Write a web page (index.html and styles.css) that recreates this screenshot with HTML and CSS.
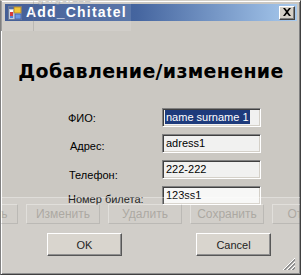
FILE: index.html
```html
<!DOCTYPE html>
<html>
<head>
<meta charset="utf-8">
<link rel="stylesheet" href="styles.css">
</head>
<body>
<div class="win">
  <div class="titlebar">
    <svg class="icon" width="14" height="14" viewBox="0 0 14 14">
      <rect x="0.5" y="0.5" width="13" height="13" fill="#b8c4d8" stroke="#5a6a8a"/>
      <rect x="1" y="1" width="12" height="2" fill="#3a5a9a"/>
      <rect x="2" y="4" width="3" height="3" fill="#ffffff"/>
      <rect x="2" y="6" width="3" height="4" fill="#d02020"/>
      <rect x="2" y="10" width="3" height="2" fill="#4070d0"/>
      <rect x="6" y="1" width="7" height="6" fill="#f0c020" stroke="#a07010" stroke-width="0.8"/>
      <rect x="7" y="8" width="6" height="5" fill="#5a8ae0" stroke="#2a4a9a" stroke-width="0.8"/>
    </svg>
    <span class="title">Add_Chitatel</span>
    <div class="close">
      <svg width="10" height="8" viewBox="0 0 10 8">
        <path d="M1 0h2l2 2.5L7 0h2L6 4l3 4H7L5 5.5 3 8H1l3-4z" fill="#000"/>
      </svg>
    </div>
  </div>
  <div class="client">
    <h1 class="heading">Добавление/изменение</h1>
    <div class="form">
      <div class="row">
        <span class="lbl lbl-fio">ФИО:</span>
        <div class="tb"><span class="sel">name surname 1</span></div>
      </div>
      <div class="row">
        <span class="lbl lbl-addr">Адрес:</span>
        <div class="tb">adress1</div>
      </div>
      <div class="row">
        <span class="lbl lbl-tel">Телефон:</span>
        <div class="tb">222-222</div>
      </div>
      <div class="row">
        <span class="lbl lbl-num">Номер билета:</span>
        <div class="tb tb-light">123ss1</div>
      </div>
    </div>
    <div class="actions">
      <div class="btn">OK</div>
      <div class="btn">Cancel</div>
    </div>
    <svg class="grip" width="13" height="13" viewBox="0 0 13 13">
      <path d="M12 1L1 12M12 5L5 12M12 9L9 12" stroke="#808080" stroke-width="1"/>
      <path d="M12 2L2 12M12 6L6 12M12 10L10 12" stroke="#808080" stroke-width="1"/>
      <path d="M12 0L0 12M12 4L4 12M12 8L8 12" stroke="#ffffff" stroke-width="1"/>
    </svg>
  </div>
  <div class="ghost-top"></div>
  <div class="ghost-strip"><span class="ghost-text">gorgor112</span></div>
  <div class="ghost-bottom">
    <div class="gbtns">
      <div class="gbtn">Добавить</div>
      <div class="gbtn">Изменить</div>
      <div class="gbtn">Удалить</div>
      <div class="gbtn">Сохранить</div>
      <div class="gbtn">Отмена</div>
    </div>
  </div>
</div>
</body>
</html>
```

FILE: styles.css
```css
* { box-sizing: border-box; }
html, body { margin: 0; padding: 0; }
body {
  width: 301px;
  height: 275px;
  overflow: hidden;
  background: #d4d0c8;
  font-family: "Liberation Sans", Arial, sans-serif;
}
.win {
  position: relative;
  width: 301px;
  height: 275px;
  border: 1px solid;
  border-color: #d4d0c8 #404040 #404040 #808080;
  box-shadow: inset 1px 1px #ffffff, inset -1px -1px #808080;
  background: #cbc8c2;
  padding: 3px 3px 2px 4px;
  display: flex;
  flex-direction: column;
  overflow: hidden;
}
.titlebar {
  height: 17px;
  flex: none;
  display: flex;
  align-items: center;
  background: linear-gradient(to right, #2a4888 0%, #45659f 45%, #a8caee 100%);
  padding-left: 3px;
  padding-right: 2px;
}
.icon { flex: none; margin-top: 1px; }
.title {
  color: #ffffff;
  font-weight: bold;
  font-size: 14px;
  letter-spacing: 1.2px;
  margin-left: 4px;
  flex: 1;
  line-height: 15px;
}
.close {
  width: 16px;
  height: 14px;
  background: #d4d0c8;
  border: 1px solid;
  border-color: #ffffff #404040 #404040 #ffffff;
  box-shadow: inset -1px -1px #808080;
  display: flex;
  align-items: center;
  justify-content: center;
  padding-bottom: 1px;
}
.client {
  flex: 1;
  position: relative;
  display: flex;
  flex-direction: column;
}
.heading {
  margin: 39px 0 0 0;
  font-family: "DejaVu Sans", sans-serif;
  font-weight: bold;
  font-size: 19px;
  line-height: 22px;
  text-align: center;
  color: #000;
  letter-spacing: 0.3px;
}
.form {
  margin-top: 26px;
  padding-left: 63px;
  display: flex;
  flex-direction: column;
  gap: 7px;
}
.row {
  display: flex;
  height: 19px;
}
.lbl {
  width: 94px;
  font-size: 11px;
  line-height: 13px;
  color: #000;
}
.lbl-fio { margin-top: 4px; }
.lbl-addr { margin-top: 6px; padding-left: 2px; }
.lbl-tel { margin-top: 9px; padding-left: 1px; }
.lbl-num { margin-top: 7px; }
.tb {
  width: 99px;
  height: 19px;
  border: 1px solid;
  border-color: #808080 #ffffff #ffffff #808080;
  box-shadow: inset 1px 1px #404040, inset -1px -1px #d4d0c8;
  background: #f1f1f0;
  font-size: 11px;
  line-height: 15px;
  padding: 1px 2px 1px 3px;
  color: #000;
  white-space: nowrap;
  overflow: hidden;
}
.tb-light { background: #f7f7f6; }
.sel {
  display: inline-block;
  background: #1e3b7c;
  color: #ffffff;
  line-height: 14px;
  margin-left: -1px;
  padding: 0 1px;
}
.actions {
  margin-top: 28px;
  padding-left: 42px;
  display: flex;
  gap: 74px;
}
.btn {
  width: 75px;
  height: 23px;
  border: 1px solid;
  border-color: #ffffff #404040 #404040 #ffffff;
  box-shadow: inset -1px -1px #808080;
  background: #d4d0c8;
  font-size: 11px;
  display: flex;
  align-items: center;
  justify-content: center;
  color: #000;
}
.grip {
  position: absolute;
  right: 1px;
  bottom: 1px;
}
.ghost-top {
  position: absolute;
  left: 0;
  top: 0;
  width: 130px;
  height: 30px;
  background: rgba(255, 255, 255, 0.12);
  border-left: 1px solid rgba(60, 60, 60, 0.5);
  pointer-events: none;
}
.ghost-top::before {
  content: "";
  position: absolute;
  left: 31px;
  top: 0;
  bottom: 0;
  border-left: 1px solid rgba(120, 120, 120, 0.25);
}
.ghost-strip {
  position: absolute;
  left: 0;
  top: 0;
  width: 130px;
  height: 4px;
  overflow: hidden;
  pointer-events: none;
}
.ghost-text {
  position: absolute;
  left: 36px;
  top: -9px;
  font-size: 12px;
  line-height: 12px;
  color: rgba(150, 150, 150, 0.5);
}
.ghost-bottom {
  position: absolute;
  left: 0;
  top: 196px;
  width: 301px;
  bottom: 0;
  background: rgba(255, 255, 255, 0.12);
  border-top: 1px solid rgba(255, 255, 255, 0.3);
  pointer-events: none;
}
.gbtns {
  display: flex;
  gap: 8px;
  margin-top: 6px;
  margin-left: -57px;
}
.gbtn {
  flex: none;
  width: 74px;
  height: 20px;
  border: 1px solid;
  border-color: rgba(255, 255, 255, 0.35) rgba(90, 90, 90, 0.18) rgba(90, 90, 90, 0.18) rgba(255, 255, 255, 0.35);
  color: rgba(140, 136, 128, 0.55);
  font-size: 12px;
  display: flex;
  align-items: center;
  justify-content: center;
}
```
